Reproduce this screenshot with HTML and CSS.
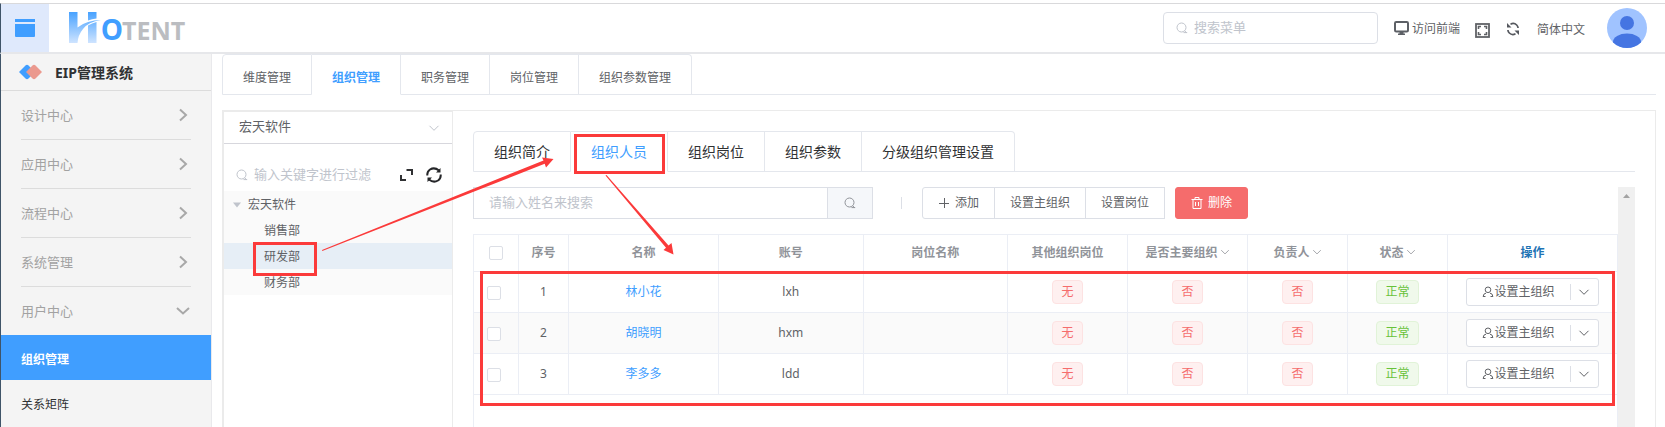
FILE: index.html
```html
<!DOCTYPE html>
<html lang="zh-CN">
<head>
<meta charset="utf-8">
<title>EIP管理系统 - 组织管理</title>
<link rel="stylesheet" href="styles.css">
</head>
<body>
<svg class="defs" width="0" height="0" aria-hidden="true">
  <symbol id="search" viewBox="0 0 12 12"><circle cx="5.5" cy="5.5" r="4.5"/><path d="M7.500 10.600h3.700M8.600 8.700l2 2"/></symbol>
  <symbol id="down" viewBox="0 0 12 12"><path d="M1.500 3.800 6 8.300l4.500-4.500"/></symbol>
  <symbol id="user" viewBox="0 0 12 12"><circle cx="6" cy="3.800" r="2.800"/><path d="M1.300 11V10Q1.300 7.600 4 7.200M10.700 11V10Q10.700 7.600 8 7.200M1.300 10.500h2.200M10.700 10.500h-2.200"/></symbol>
</svg>
<div class="app">
  <header class="header">
    <button class="menu-toggle" aria-label="菜单"><svg width="20" height="20" viewBox="0 0 20 20"><path fill="#409eff" d="M0 1h20v3H0zM0 6h20v12.500l-1 .5H1l-1-.5z"/></svg></button>
    <a class="logo" href="#" aria-label="HOTENT">
      <svg width="33" height="32" viewBox="0 0 33 32"><defs><linearGradient id="lg" x1="0" y1="0" x2="0" y2="32" gradientUnits="userSpaceOnUse"><stop offset="0" stop-color="#48a2ff"/><stop offset="1" stop-color="#d3e6ff"/></linearGradient></defs><path fill="url(#lg)" d="M0 0h8.500v15.500Q18 8 32 8Q19 10 14 17Q9 23 8.500 31H0zM19 0h8.500v6.500Q23 7 19 8.500zM19 13.500Q23 11 27.500 10v21H19z"/></svg>
      <span class="logo-o">O</span><span class="logo-text">TENT</span>
    </a>
    <div class="tools">
      <label class="menu-search"><svg class="line" width="12" height="12"><use href="#search"/></svg><input type="text" placeholder="搜索菜单" aria-label="搜索菜单"></label>
      <a class="front" href="#"><svg width="15" height="15" viewBox="0 0 15 15"><rect x="1" y="1" width="13" height="9.500" rx="1.200" fill="none" stroke="#5d6066" stroke-width="2"/><path fill="#5d6066" d="M5.500 10.500h4v2h1.500v1.500H4v-1.500h1.500z"/></svg><span>访问前端</span></a>
      <button class="tool full" aria-label="全屏"><svg width="15" height="15" viewBox="0 0 15 15" fill="none" stroke="#606266"><rect x="1" y="1" width="13" height="13" stroke-width="1.800"/><path stroke-width="1.600" d="M3.500 6V3.500H6M9 3.500h2.500V6M11.500 9v2.500H9M6 11.500H3.500V9"/></svg></button>
      <button class="tool refresh" aria-label="刷新"><svg width="14" height="14" viewBox="0 0 14 14" fill="none" stroke="#55585e" stroke-width="1.700"><path d="M4.500 2.200Q8 .4 10.700 3Q12 4.300 12.100 6M9.500 11.800Q6 13.600 3.300 11Q2 9.700 1.900 8"/><path fill="#55585e" stroke="none" d="M1 1v4.500h4.500zM13 13V8.500H8.500z"/></svg></button>
      <button class="lang">简体中文</button>
      <button class="avatar" aria-label="用户"><svg width="40" height="40" viewBox="0 0 40 40"><defs><clipPath id="av"><circle cx="20" cy="20" r="20"/></clipPath></defs><g clip-path="url(#av)"><path fill="#a0c3ff" d="M0 0h40v40H0z"/><circle cx="20" cy="15" r="7" fill="#4575e2"/><ellipse cx="20" cy="34" rx="14" ry="8.500" fill="#4575e2"/></g></svg></button>
    </div>
  </header>
  <div class="body">
    <nav class="sidebar">
      <div class="system"><svg width="24" height="16" viewBox="0 0 24 16"><path fill="#409eff" d="M0 8 6.500 1.500Q8 0 9.500 1.500L16 8l-6.500 6.500Q8 16 6.500 14.500z"/><path fill="#eb998e" d="m7 8 6.500-6.500Q15 0 16.500 1.500L23 8l-6.500 6.500Q15 16 13.500 14.500z"/></svg><strong>EIP管理系统</strong></div>
      <button class="group">设计中心<svg class="arrow" viewBox="0 0 14 14"><path d="m4 1.500 6 5.500-6 5.500"/></svg></button>
      <button class="group">应用中心<svg class="arrow" viewBox="0 0 14 14"><path d="m4 1.500 6 5.500-6 5.500"/></svg></button>
      <button class="group">流程中心<svg class="arrow" viewBox="0 0 14 14"><path d="m4 1.500 6 5.500-6 5.500"/></svg></button>
      <button class="group">系统管理<svg class="arrow" viewBox="0 0 14 14"><path d="m4 1.500 6 5.500-6 5.500"/></svg></button>
      <button class="group open">用户中心<svg class="arrow" viewBox="0 0 14 14"><path d="m1 4 6 5.500L13 4"/></svg></button>
      <a class="leaf active" href="#">组织管理</a>
      <a class="leaf" href="#">关系矩阵</a>
    </nav>
    <main class="main">
      <div class="tabs page-tabs" role="tablist">
        <button role="tab">维度管理</button><button role="tab" class="on">组织管理</button><button role="tab">职务管理</button><button role="tab">岗位管理</button><button role="tab">组织参数管理</button><span class="rest"></span>
      </div>
      <div class="panel">
        <aside class="orgs">
          <div class="dim"><select aria-label="维度"><option>宏天软件</option></select><svg class="line" width="12" height="12"><use href="#down"/></svg></div>
          <div class="filter">
            <svg class="line" width="12" height="12"><use href="#search"/></svg>
            <input type="text" placeholder="输入关键字进行过滤" aria-label="输入关键字进行过滤">
            <button aria-label="展开"><svg width="14" height="14" viewBox="0 0 14 14" fill="none" stroke="#303133" stroke-width="2"><path d="M7.500 2H13v5M2 7v5h5"/></svg></button>
            <button aria-label="刷新"><svg width="18" height="18" viewBox="0 0 18 18" fill="none" stroke="#252629" stroke-width="2"><path d="M2.300 9.500Q2 5.500 5 3.500Q9.500 .8 14 4.500M15.700 8.500Q16 12.500 13 14.500Q8.500 17.200 4 13.500"/><path fill="#252629" stroke="none" d="M15.500 2v4.500H11zM2.500 16v-4.500H7z"/></svg></button>
          </div>
          <ul class="tree">
            <li class="root"><svg width="8" height="6" viewBox="0 0 8 6"><path fill="#c0c4cc" d="M0 .5h8L4 5.500z"/></svg>宏天软件</li>
            <li>销售部</li>
            <li class="selected">研发部</li>
            <li>财务部</li>
          </ul>
        </aside>
        <section class="content">
          <div class="tabs org-tabs" role="tablist">
            <button role="tab">组织简介</button><button role="tab" class="on">组织人员</button><button role="tab">组织岗位</button><button role="tab">组织参数</button><button role="tab">分级组织管理设置</button><span class="rest"></span>
          </div>
          <div class="scroller">
            <div class="view">
              <div class="toolbar">
                <div class="name-search"><input type="text" placeholder="请输入姓名来搜索" aria-label="请输入姓名来搜索"><button aria-label="搜索"><svg class="line" width="12" height="12"><use href="#search"/></svg></button></div>
                <span class="divider"></span>
                <div class="btns"><button><svg class="line" width="12" height="12" viewBox="0 0 12 12"><path d="M1 6.500h10M6.500 1v10"/></svg>添加</button><button>设置主组织</button><button>设置岗位</button></div>
                <button class="delete"><svg class="line" width="12" height="12" viewBox="0 0 12 12"><path d="M.5 2.500h11M4 2.500v-2h4v2M2 2.500v9h8v-9M4.500 5v4M7.500 5v4"/></svg>删除</button>
              </div>
              <div class="grid">
                <table>
                  <colgroup><col class="c45"><col class="c50"><col class="c150"><col><col><col class="c120"><col class="c120"><col class="c100"><col class="c100"><col class="c169"></colgroup>
                  <thead><tr><th><input type="checkbox" aria-label="全选"></th><th>序号</th><th>名称</th><th>账号</th><th>岗位名称</th><th>其他组织岗位</th><th>是否主要组织<svg class="line" width="10" height="10"><use href="#down"/></svg></th><th>负责人<svg class="line" width="10" height="10"><use href="#down"/></svg></th><th>状态<svg class="line" width="10" height="10"><use href="#down"/></svg></th><th class="ops">操作</th></tr></thead>
                  <tbody>
                    <tr><td class="pick"><input type="checkbox" aria-label="林小花"></td><td>1</td><td><a href="#">林小花</a></td><td>lxh</td><td></td><td><span class="tag">无</span></td><td><span class="tag">否</span></td><td><span class="tag">否</span></td><td><span class="tag ok">正常</span></td><td><div class="split"><button><svg class="line" width="12" height="12"><use href="#user"/></svg>设置主组织</button><button class="more" aria-label="更多"><svg class="line" width="12" height="12"><use href="#down"/></svg></button></div></td></tr>
                    <tr><td class="pick"><input type="checkbox" aria-label="胡晓明"></td><td>2</td><td><a href="#">胡晓明</a></td><td>hxm</td><td></td><td><span class="tag">无</span></td><td><span class="tag">否</span></td><td><span class="tag">否</span></td><td><span class="tag ok">正常</span></td><td><div class="split"><button><svg class="line" width="12" height="12"><use href="#user"/></svg>设置主组织</button><button class="more" aria-label="更多"><svg class="line" width="12" height="12"><use href="#down"/></svg></button></div></td></tr>
                    <tr><td class="pick"><input type="checkbox" aria-label="李多多"></td><td>3</td><td><a href="#">李多多</a></td><td>ldd</td><td></td><td><span class="tag">无</span></td><td><span class="tag">否</span></td><td><span class="tag">否</span></td><td><span class="tag ok">正常</span></td><td><div class="split"><button><svg class="line" width="12" height="12"><use href="#user"/></svg>设置主组织</button><button class="more" aria-label="更多"><svg class="line" width="12" height="12"><use href="#down"/></svg></button></div></td></tr>
                  </tbody>
                </table>
              </div>
            </div>
            <div class="scrollbar"><svg width="7" height="4" viewBox="0 0 7 4"><path fill="#a3a3a3" d="M0 4 3.500 0 7 4z"/></svg></div>
          </div>
        </section>
      </div>
    </main>
  </div>
</div>
<div class="mark mark-dept"></div>
<div class="mark mark-tab"></div>
<div class="mark mark-rows"></div>
<svg class="mark-arrows" width="700" height="270" viewBox="0 0 700 270" aria-hidden="true"><path fill="#fb3a3a" d="M322 250 543.500 160.500 542 157.500 553.500 159 546 167.500 544.700 163.800 322.300 251zM605.500 175.500 606.500 175 668.500 245.500 671.500 243 673.500 254.500 663.500 250 666 247.800z"/></svg>
</body>
</html>
```
FILE: styles.css
```css
* { box-sizing: border-box; }
body {
  margin: 0;
  height: 100vh;
  overflow: hidden;
  position: relative;
  background: #fff;
  color: #606266;
  font: 12px/18px "Noto Sans", "Noto Sans CJK SC", sans-serif;
}
button, input, select { font: inherit; color: inherit; margin: 0; }
button { padding: 0; border: 0; background: none; cursor: pointer; }
input, select { outline: 0; }
input::placeholder { color: #c0c4cc; opacity: 1; }
a { color: inherit; text-decoration: none; }
svg { display: block; flex: none; }
.defs { position: absolute; }
.line { fill: none; stroke: currentColor; stroke-width: 1; }

.app { height: 100vh; padding-top: 3px; display: flex; flex-direction: column; }

.header {
  flex: none;
  display: flex;
  align-items: center;
  border-top: 1px solid #d9d9db;
  border-bottom: 2px solid #e6e7ea;
  border-left: 1px solid #3f5468;
}
.menu-toggle { width: 48px; height: 48px; display: flex; align-items: center; justify-content: center; background: #dfe9fc; }
.logo { display: flex; align-items: flex-end; margin-left: 20px; font-family: "Open Sans", "Noto Sans", sans-serif; font-weight: 700; color: #bbbdc1; }
.logo-o { width: 20px; display: flex; justify-content: center; font-size: 28px; line-height: 30px; color: #409eff; }
.logo-text { font-size: 25px; line-height: 28px; }
.tools { margin-left: auto; display: flex; align-items: center; padding-right: 18px; }
.menu-search { width: 215px; height: 32px; padding: 0 12px; display: flex; align-items: center; gap: 6px; border: 1px solid #dcdfe6; border-radius: 4px; color: #c0c4cc; font-size: 13px; }
.menu-search input { flex: 1; min-width: 0; border: 0; padding: 0 0 2px; background: none; }
.front { display: flex; align-items: center; gap: 3px; margin-left: 16px; }
.front span { padding-top: 2px; }
.full { margin-left: 15px; padding-top: 4px; }
.refresh { margin-left: 16px; padding-top: 2px; }
.lang { margin-left: 17px; padding-top: 4px; }
.avatar { margin-left: 22px; }

.body { flex: 1; min-height: 0; display: flex; }
.sidebar { flex: none; width: 212px; background: #f4f4f4; border-right: 1px solid #e9e9ec; border-left: 1px solid #3f5468; }
.system { height: 37px; padding-left: 18px; display: flex; align-items: center; gap: 12px; border-bottom: 1px solid #dcdcdc; color: #303133; font-size: 14px; }
.system strong { padding-top: 2px; }
.group { display: flex; align-items: center; justify-content: space-between; width: calc(100% - 40px); height: 49px; margin-left: 20px; padding-right: 1px; border-bottom: 1px solid #dcdcdc; color: #a2a2a2; font-size: 13px; }
.group.open { height: 48px; border-bottom: 0; }
.arrow { width: 14px; height: 14px; fill: none; stroke: #a8a8a8; stroke-width: 2; }
.leaf { display: block; height: 45px; padding: 4px 0 0 20px; line-height: 41px; color: #303133; }
.leaf.active { background: #409eff; color: #fff; font-weight: 700; }

.main { flex: 1; min-width: 0; padding: 0 9px 0 10px; display: flex; flex-direction: column; }
.tabs { flex: none; display: flex; height: 41px; margin-bottom: 15px; }
.tabs button { padding: 0 20px; border: solid #e4e7ed; border-width: 1px 1px 1px 0; }
.tabs button:first-child { border-left-width: 1px; border-top-left-radius: 4px; }
.tabs button:nth-last-child(2) { border-top-right-radius: 4px; }
.tabs .on { color: #409eff; border-bottom-color: #fff; }
.rest { flex: 1; border-bottom: 1px solid #e4e7ed; }
.page-tabs button { padding-top: 6px; }
.page-tabs .on { font-weight: 700; }
.org-tabs { color: #303133; font-size: 14px; }

.panel { flex: 1; min-height: 0; display: flex; }
.orgs { flex: none; width: 231px; border: solid #ebebeb; border-width: 2px 1px 0 2px; }
.dim { display: flex; align-items: center; height: 32px; padding: 0 12px 0 15px; border-bottom: 1px solid #d7d7dd; color: #c0c4cc; font-size: 13px; }
.dim select { flex: 1; appearance: none; border: 0; padding: 0 0 3px; background: none; color: #606266; }
.filter { display: flex; align-items: center; height: 33px; margin-top: 14px; padding: 0 9px 0 12px; color: #c0c4cc; font-size: 13px; }
.filter input { flex: 1; min-width: 0; margin-left: 6px; padding: 0 0 2px; border: 0; background: none; }
.filter button { margin-left: 12px; }
.tree { list-style: none; margin: 0; padding: 0; background: #fafafa; }
.tree li { display: flex; align-items: center; height: 26px; padding: 2px 0 0 40px; }
.tree .root { padding-left: 9px; gap: 7px; }
.tree .selected { background: #e6eef6; }

.content { flex: 1; min-width: 0; padding: 20px 20px 0; display: flex; flex-direction: column; border: solid #ebebeb; border-width: 1px 1px 0 0; }
.scroller { flex: 1; min-height: 0; display: flex; }
.view { flex: 1; min-width: 0; display: flex; flex-direction: column; }
.scrollbar { flex: none; width: 17px; padding-top: 7px; background: #f0f0f0; display: flex; justify-content: center; }
.toolbar { flex: none; display: flex; align-items: center; height: 32px; margin-bottom: 15px; }
.name-search { display: flex; width: 400px; height: 32px; border: 1px solid #dcdfe6; font-size: 13px; }
.name-search input { flex: 1; min-width: 0; padding: 0 15px 2px; border: 0; background: none; }
.name-search button { width: 45px; display: flex; align-items: center; justify-content: center; border-left: 1px solid #dcdfe6; background: #f5f7fa; color: #909399; }
.divider { width: 1px; height: 12px; margin: 0 20px 0 28px; background: #dcdfe6; }
.btns { display: flex; }
.btns button, .delete { display: flex; align-items: center; gap: 5px; height: 32px; padding: 0 15px; border: 1px solid #dcdfe6; }
.btns button + button { margin-left: -1px; }
.btns button:first-child { border-radius: 3px 0 0 3px; }
.delete { margin-left: 10px; border-color: #f56c6c; border-radius: 3px; background: #f56c6c; color: #fff; }

.grid { flex: 1; min-height: 0; border: solid #ebeef5; border-width: 1px 1px 0; }
table { width: 100%; table-layout: fixed; border-spacing: 0; text-align: center; }
.c45 { width: 45px; }
.c50 { width: 50px; }
.c100 { width: 100px; }
.c120 { width: 120px; }
.c150 { width: 150px; }
.c169 { width: 169px; }
th, td { padding: 0; border: solid #ebeef5; border-width: 0 1px 1px 0; }
th:last-child, td:last-child { border-right: 0; }
th { height: 37px; color: #909399; font-weight: 700; }
th svg { display: inline-block; margin-left: 2px; }
th.ops { color: #1f74b5; }
td { height: 41px; }
td a { color: #409eff; }
tbody tr:nth-child(2) { background: #fafafa; }
input[type="checkbox"] { appearance: none; display: block; width: 14px; height: 14px; margin: 0 auto; border: 1px solid #dcdfe6; border-radius: 2px; background: #fff; }
.pick { padding: 2px 4px 0 0; }
.tag { display: inline-block; height: 24px; padding: 0 8px; line-height: 22px; border: 1px solid #fde2e2; border-radius: 4px; background: #fef0f0; color: #f56c6c; vertical-align: middle; }
.tag.ok { border-color: #e1f3d8; background: #f0f9eb; color: #67c23a; }
.split { display: inline-flex; height: 28px; align-items: center; border: 1px solid #dcdfe6; border-radius: 3px; background: #fff; vertical-align: middle; }
.split button { display: flex; align-items: center; padding: 0 15px; }
.split .more { height: 16px; padding: 0 8px 0 7px; border-left: 1px solid #dcdfe6; }

.mark { position: absolute; border: 3px solid #fb3a3a; pointer-events: none; }
.mark-dept { left: 253px; top: 242px; width: 64px; height: 34px; }
.mark-tab { left: 574px; top: 134px; width: 91px; height: 40px; }
.mark-rows { left: 480px; right: 50px; top: 271px; height: 135px; }
.mark-arrows { position: absolute; left: 0; top: 0; pointer-events: none; }
```
